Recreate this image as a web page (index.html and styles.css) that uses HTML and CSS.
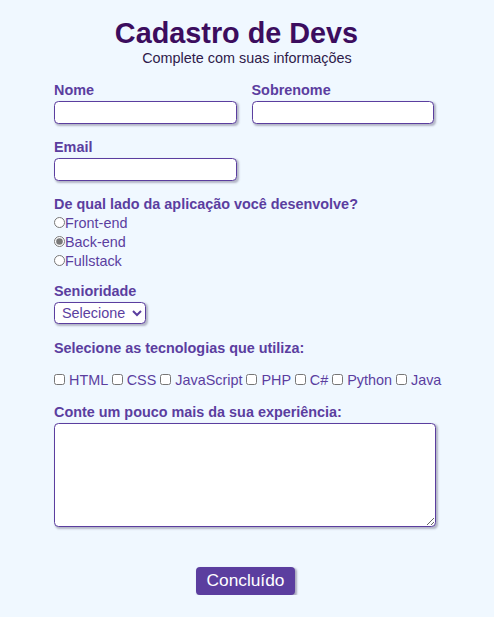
FILE: index.html
```html
<!DOCTYPE html>
<html lang="pt-BR">
<head>
<meta charset="utf-8">
<title>Cadastro de Devs</title>
<link rel="stylesheet" href="styles.css">
</head>
<body>
<main class="page">
  <header class="head">
    <h1 class="title">Cadastro de Devs</h1>
    <p class="subtitle">Complete com suas informações</p>
  </header>
  <form class="form">
    <div class="row">
      <div class="field">
        <label class="label" for="nome">Nome</label>
        <input class="input" id="nome" type="text">
      </div>
      <div class="field">
        <label class="label" for="sobrenome">Sobrenome</label>
        <input class="input" id="sobrenome" type="text">
      </div>
    </div>
    <div class="field g-email">
      <label class="label" for="email">Email</label>
      <input class="input" id="email" type="email">
    </div>
    <div class="field g-lado">
      <span class="label">De qual lado da aplicação você desenvolve?</span>
      <div class="radios">
        <label class="opt"><input class="radio" type="radio" name="lado">Front-end</label>
        <label class="opt"><input class="radio" type="radio" name="lado" checked>Back-end</label>
        <label class="opt"><input class="radio" type="radio" name="lado">Fullstack</label>
      </div>
    </div>
    <div class="field g-sen">
      <label class="label" for="sen">Senioridade</label>
      <select class="select" id="sen">
        <option>Selecione</option>
        <option>Júnior</option>
        <option>Pleno</option>
        <option>Sênior</option>
      </select>
    </div>
    <div class="field g-tech">
      <span class="label">Selecione as tecnologias que utiliza:</span>
      <div class="checks"><input class="check" type="checkbox"> HTML <input class="check" type="checkbox"> CSS <input class="check" type="checkbox"> JavaScript <input class="check" type="checkbox"> PHP <input class="check" type="checkbox"> C# <input class="check" type="checkbox"> Python <input class="check" type="checkbox"> Java</div>
    </div>
    <div class="field g-exp">
      <label class="label" for="exp">Conte um pouco mais da sua experiência:</label>
      <textarea class="textarea" id="exp"></textarea>
    </div>
    <button class="button" type="button">Concluído</button>
  </form>
</main>
</body>
</html>
```
FILE: styles.css
```css
html, body {
  margin: 0;
  padding: 0;
  background: #f0f8ff;
}

body {
  font-family: "Liberation Sans", Arial, sans-serif;
  color: #5b3e9f;
}

.page {
  width: 386px;
  margin: 0 auto;
  padding-top: 16.5px;
}

.head {
  text-align: center;
}

.title {
  margin: 0;
  padding-right: 21px;
  font-size: 28.8px;
  line-height: 33px;
  font-weight: bold;
  color: #3c0d5e;
}

.subtitle {
  margin: 0;
  font-size: 14.4px;
  line-height: 16.5px;
  color: #2e1a4a;
}

.form {
  display: flex;
  flex-direction: column;
  margin-top: 15.8px;
}

.row {
  display: flex;
  gap: 15px;
}

.field {
  display: flex;
  flex-direction: column;
  align-items: flex-start;
}

.label {
  display: block;
  font-size: 14.4px;
  line-height: 16.5px;
  font-weight: bold;
  color: #5b3e9f;
  margin-bottom: 2.7px;
}

.input {
  box-sizing: border-box;
  width: 182.5px;
  height: 23.3px;
  margin: 0;
  padding: 1px 4px;
  border: 1.5px solid #5b3e9f;
  border-radius: 4.5px;
  background: #fff;
  box-shadow: 1.5px 1.5px 2px rgba(40, 30, 70, 0.3);
  font-family: inherit;
  font-size: 13px;
}

.g-email { margin-top: 14.7px; }
.g-lado { margin-top: 14.2px; }
.g-lado .label { margin-bottom: 1.5px; }
.g-sen { margin-top: 12.7px; }
.g-sen .label { margin-bottom: 2.5px; }
.g-tech { margin-top: 15.5px; }
.g-tech .label { margin-bottom: 15.5px; }
.g-exp { margin-top: 16px; }
.g-exp .label { margin-bottom: 2.3px; }

.radios {
  display: flex;
  flex-direction: column;
}

.opt {
  display: block;
  font-size: 14.4px;
  line-height: 19px;
  color: #5b3e9f;
}

.radio {
  width: 11px;
  height: 11px;
  margin: 0;
  accent-color: #787878;
  vertical-align: baseline;
}

.select {
  box-sizing: border-box;
  width: 92px;
  height: 22px;
  margin: 0;
  padding: 0 2px 0 3px;
  border: 1.5px solid #5b3e9f;
  border-radius: 4.5px;
  background: #fff;
  color: #5b3e9f;
  font-family: inherit;
  font-size: 14.4px;
  box-shadow: 1.5px 1.5px 2px rgba(40, 30, 70, 0.3);
}

.checks {
  font-size: 14.4px;
  line-height: 16.5px;
  white-space: nowrap;
  color: #5b3e9f;
}

.check {
  width: 11px;
  height: 11px;
  margin: 0;
  vertical-align: baseline;
}

.textarea {
  box-sizing: border-box;
  width: 381.5px;
  height: 103.4px;
  margin: 0;
  border: 1.5px solid #5b3e9f;
  border-radius: 4.5px;
  background: #fff;
  box-shadow: 1.5px 1.5px 2px rgba(40, 30, 70, 0.3);
  font-family: inherit;
  font-size: 13px;
}

.button {
  align-self: center;
  margin-top: 40.3px;
  margin-right: 3px;
  width: 99px;
  height: 28px;
  padding: 0;
  border: none;
  border-radius: 4px;
  background: #5b3e9f;
  color: #fff;
  font-family: inherit;
  font-size: 17.3px;
  box-shadow: 1.5px 1.5px 2px rgba(40, 30, 70, 0.35);
  cursor: pointer;
}
```
